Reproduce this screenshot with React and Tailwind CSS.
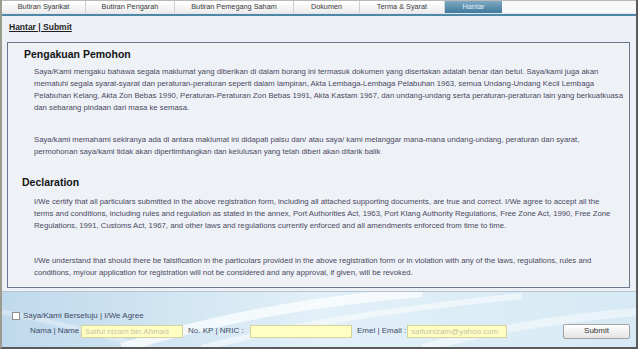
import React from "react";

const tabs = [
  { label: "Butiran Syarikat", w: 86 },
  { label: "Butiran Pengarah", w: 89 },
  { label: "Butiran Pemegang Saham", w: 119 },
  { label: "Dokumen", w: 66 },
  { label: "Terma & Syarat", w: 85 },
];

function Line({ children }) {
  return <div className="whitespace-nowrap h-[12px] leading-[12px]">{children}</div>;
}

export default function App() {
  return (
    <div
      className="w-[638px] h-[349px] overflow-hidden bg-[#edf1f5] flex flex-col border-l-2 border-l-[#9c9c8e] border-r-2 border-r-[#5a5a5a] border-b-2 border-b-[#5a5a5a]"
      style={{ fontFamily: '"Liberation Sans", Arial, sans-serif' }}
    >
      {/* Tabs */}
      <div className="flex h-[13px] bg-gradient-to-b from-[#ffffff] to-[#ececec] border-t border-t-[#b9b9b9]">
        {tabs.map((t, i) => (
          <div
            key={t.label}
            style={{ width: t.w - (i === 0 ? 2 : 0) }}
            className="flex items-center justify-center text-[7.3px] text-[#3b3b3b] border-r border-r-[#d0d0d0] leading-none"
          >
            {t.label}
          </div>
        ))}
        <div className="w-[57px] flex items-center justify-center text-[7.3px] text-[#e8f2f8] bg-gradient-to-b from-[#7ea9c2] to-[#3f7a9c] leading-none">
          Hantar
        </div>
        <div className="flex-1 bg-[#f7f8f9]" />
      </div>
      <div className="h-[1px] bg-[#dfe7ec]" />
      <div className="h-[2px] bg-[#4f87a6]" />

      {/* Body */}
      <div className="flex flex-col px-[5px]">
        <div className="pl-[2px] pt-[6px] h-[26px] text-[8.5px] leading-[10px]">
          <span className="font-bold underline text-[#1e1e1e]">Hantar | Submit</span>
        </div>

        <div className="w-[623px] h-[246px] border border-[#6b7890] bg-[#eef2f7] flex flex-col">
          <div className="pl-[16px] pt-[4px] h-[23px] text-[10.5px] font-bold leading-[14px] text-[#141414]">
            Pengakuan Pemohon
          </div>
          <div className="pl-[26px] text-[7.75px] text-[#4b4860]">
            <Line>Saya/Kami mengaku bahawa segala maklumat yang diberikan di dalam borang ini termasuk dokumen yang disertakan adalah benar dan betul. Saya/kami juga akan</Line>
            <Line>mematuhi segala syarat-syarat dan peraturan-peraturan seperti dalam lampiran, Akta Lembaga-Lembaga Pelabuhan 1963, semua Undang-Undang Kecil Lembaga</Line>
            <Line>Pelabuhan Kelang, Akta Zon Bebas 1990, Peraturan-Peraturan Zon Bebas 1991, Akta Kastam 1967, dan undang-undang serta peraturan-peraturan lain yang berkuatkuasa</Line>
            <Line>dan sebarang pindaan dari masa ke semasa.</Line>
            <div className="h-[20px]" />
            <Line>Saya/kami memahami sekiranya ada di antara maklumat ini didapati palsu dan/ atau saya/ kami melanggar mana-mana undang-undang, peraturan dan syarat,</Line>
            <Line>permohonan saya/kami tidak akan dipertimbangkan dan kelulusan yang telah diberi akan ditarik balik</Line>
          </div>
          <div className="pl-[14px] pt-[17px] h-[38px] text-[10.5px] font-bold leading-[14px] text-[#141414]">
            Declaration
          </div>
          <div className="pl-[26px] text-[7.75px] text-[#4b4860]">
            <Line>I/We certify that all particulars submitted in the above registration form, including all attached supporting documents, are true and correct. I/We agree to accept all the</Line>
            <Line>terms and conditions, including rules and regulation as stated in the annex, Port Authorities Act, 1963, Port Klang Authority Regulations, Free Zone Act, 1990, Free Zone</Line>
            <Line>Regulations, 1991, Customs Act, 1967, and other laws and regulations currently enforced and all amendments enforced from time to time.</Line>
            <div className="h-[23px]" />
            <Line>I/We understand that should there be falsification in the particulars provided in the above registration form or in violation with any of the laws, regulations, rules and</Line>
            <Line>conditions, my/our application for registration will not be considered and any approval, if given, will be revoked.</Line>
          </div>
        </div>
      </div>

      {/* Bottom area */}
      <div className="mt-[3px] flex-1 relative border-t border-t-[#b8c4cf] bg-gradient-to-r from-[#bfd9ec] via-[#e2f0f8] to-[#d6e9f4] overflow-hidden">
        <svg className="absolute inset-0" width="636" height="56" viewBox="0 0 636 56">
          <path d="M120 56 C 200 30, 300 10, 420 0" stroke="#ffffff" strokeOpacity="0.7" strokeWidth="10" fill="none" />
          <path d="M200 56 C 280 35, 380 18, 520 4" stroke="#ffffff" strokeOpacity="0.5" strokeWidth="6" fill="none" />
          <path d="M420 56 C 480 40, 560 25, 636 20" stroke="#ffffff" strokeOpacity="0.45" strokeWidth="8" fill="none" />
          <path d="M0 20 C 60 30, 120 50, 150 56" stroke="#ffffff" strokeOpacity="0.3" strokeWidth="5" fill="none" />
        </svg>
        <div className="relative flex flex-col">
          <div className="flex items-center pl-[10px] pt-[17px] h-[30px]">
            <div className="w-[8px] h-[8px] bg-white border border-[#8f8f8f]" />
            <span className="ml-[3px] text-[8px] text-[#3f4a66]">Saya/Kami Bersetuju | I/We Agree</span>
          </div>
          <div className="flex items-center h-[14px] mt-[2px] text-[8px] text-[#3f4a66]">
            <span className="ml-[28px] w-[51px] whitespace-nowrap">Nama | Name :</span>
            <div className="w-[102px] h-[13px] bg-[#ffffc4] border border-[#d8d29c] text-[#c8c4a8] px-[3px] leading-[11px] whitespace-nowrap">Saiful nizam bin Ahmad</div>
            <span className="ml-[5px] w-[62px] whitespace-nowrap">No. KP | NRIC :</span>
            <div className="w-[102px] h-[13px] bg-[#ffffc4] border border-[#d8d29c]" />
            <span className="ml-[5px] w-[50px] whitespace-nowrap">Emel | Email :</span>
            <div className="w-[100px] h-[13px] bg-[#ffffc4] border border-[#d8d29c] text-[#c8c4a8] px-[3px] leading-[11px] whitespace-nowrap">saifulnizam@yahoo.com</div>
            <div className="ml-[56px] w-[67px] h-[15px] rounded-[2px] border border-[#a3a3a3] bg-gradient-to-b from-[#ffffff] to-[#e4e4e4] flex items-center justify-center text-[#333]">
              Submit
            </div>
          </div>
        </div>
      </div>
    </div>
  );
}
